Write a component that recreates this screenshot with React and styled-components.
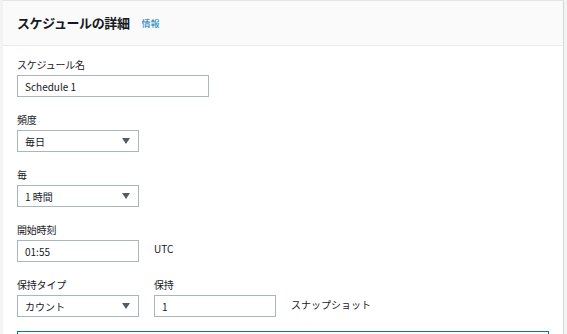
import React from 'react';
import styled, { createGlobalStyle } from 'styled-components';

const GlobalStyle = createGlobalStyle`
  html, body {
    margin: 0;
    padding: 0;
    background: #f2f3f3;
    font-family: "Noto Sans CJK JP", "Noto Sans", sans-serif;
    color: #16191f;
    overflow: hidden;
  }
`;

const Page = styled.div`
  padding-left: 3px;
  height: 334px;
  overflow: hidden;
`;

const Card = styled.section`
  width: 561px;
  height: 334px;
  overflow: hidden;
  background: #ffffff;
  border-top: 1px solid #e3e5e5;
  border-right: 1px solid #d5d8d8;
  box-sizing: border-box;
`;

const Header = styled.header`
  height: 45px;
  box-sizing: border-box;
  background: #fafafa;
  border-bottom: 1px solid #eaeded;
  display: flex;
  align-items: center;
  padding: 0 0 1px 14px;
  gap: 12px;
`;

const Title = styled.h2`
  margin: 0;
  font-size: 13px;
  font-weight: 700;
  letter-spacing: -0.4px;
`;

const InfoLink = styled.a`
  font-size: 9px;
  color: #0073bb;
  text-decoration: none;
  margin-top: 2px;
`;

const Body = styled.div`
  padding: 12px 0 0 14px;
  display: flex;
  flex-direction: column;
  gap: 16px;
`;

const Row = styled.div`
  display: flex;
  align-items: flex-end;
  gap: 15px;
`;

const Field = styled.div`
  display: flex;
  flex-direction: column;
`;

const Label = styled.label`
  font-size: 10px;
  line-height: 14px;
  margin-bottom: 3px;
  letter-spacing: -0.2px;
`;

const Control = styled.div`
  width: ${p => p.w}px;
  height: 22px;
  box-sizing: border-box;
  border: 1px solid #aab7b8;
  background: #fff;
  display: flex;
  align-items: center;
  justify-content: space-between;
  padding: 0 8px 0 7px;
  font-size: 10px;
`;

const Caret = styled.span`
  width: 0;
  height: 0;
  border-left: 4px solid transparent;
  border-right: 4px solid transparent;
  border-top: 6px solid #545b64;
`;

const Suffix = styled.span`
  font-size: 10px;
  height: 22px;
  display: flex;
  align-items: center;
  margin-bottom: ${p => p.lift || 0}px;
`;

const Editor = styled.div`
  width: 532px;
  height: 20px;
  flex-shrink: 0;
  box-sizing: border-box;
  border: 1px solid #0073bb;
  margin-top: -2px;
`;

function Select({ value }) {
  return (
    <Control w={122}>
      <span>{value}</span>
      <Caret />
    </Control>
  );
}

export default function App() {
  return (
    <Page>
      <GlobalStyle />
      <Card>
        <Header>
          <Title>スケジュールの詳細</Title>
          <InfoLink href="#">情報</InfoLink>
        </Header>
        <Body>
          <Field>
            <Label>スケジュール名</Label>
            <Control w={192}>Schedule 1</Control>
          </Field>
          <Field>
            <Label>頻度</Label>
            <Select value="毎日" />
          </Field>
          <Field>
            <Label>毎</Label>
            <Select value="1 時間" />
          </Field>
          <Row>
            <Field>
              <Label>開始時刻</Label>
              <Control w={122}>01:55</Control>
            </Field>
            <Suffix lift={3}>UTC</Suffix>
          </Row>
          <Row>
            <Field>
              <Label>保持タイプ</Label>
              <Select value="カウント" />
            </Field>
            <Field>
              <Label>保持</Label>
              <Control w={122}>1</Control>
            </Field>
            <Suffix lift={2}>スナップショット</Suffix>
          </Row>
          <Editor />
        </Body>
      </Card>
    </Page>
  );
}
